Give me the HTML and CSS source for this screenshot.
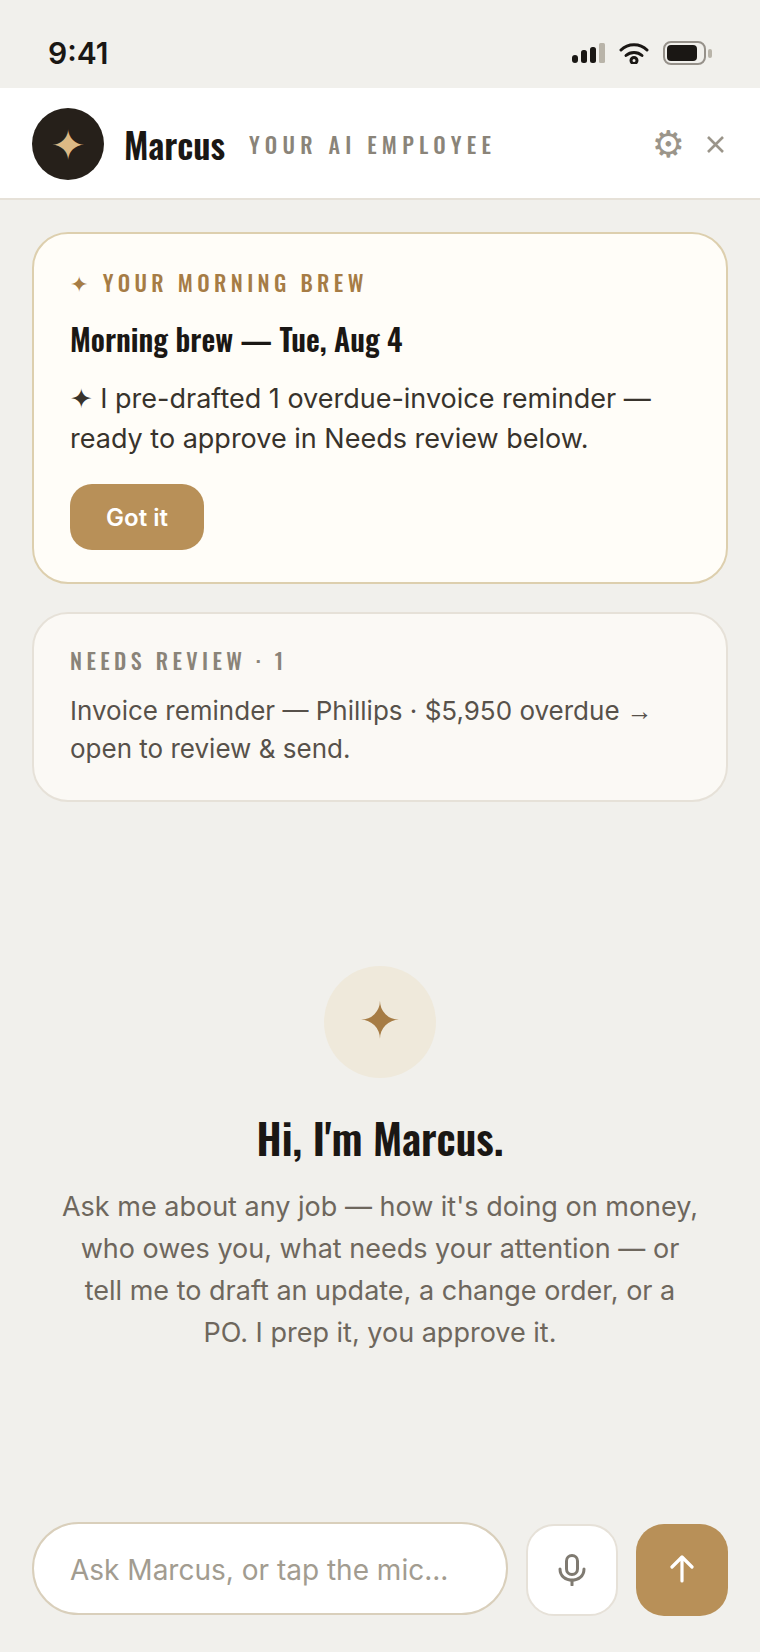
FILE: index.html
```html
<!DOCTYPE html>
<html lang="en">
<head>
    <meta charset="UTF-8">
    <meta name="viewport" content="width=device-width, initial-scale=1.0">
    <title>Marcus</title>
    <link rel="stylesheet" href="styles.css">
</head>
<body>
    <div class="app">
        <div class="status-bar">
            <span class="status-time">9:41</span>
            <div class="status-icons">
                <svg class="icon-signal" width="33" height="20" viewBox="0 0 33 20">
                    <rect x="0" y="12" width="6" height="8" rx="3" fill="#1a1714"/>
                    <rect x="9" y="7" width="6" height="13" rx="2.5" fill="#1a1714"/>
                    <rect x="18" y="4" width="6" height="16" rx="2.5" fill="#1a1714"/>
                    <rect x="27" y="0" width="6" height="20" rx="1.5" fill="#b9b4a9"/>
                </svg>
                <svg class="icon-wifi" width="30" height="22" viewBox="0 0 30 22" fill="none" stroke="#1a1714" stroke-width="3" stroke-linecap="round">
                    <path d="M2 8 C9 1 21 1 28 8"/>
                    <path d="M7 13.5 C11.5 9.5 18.500 9.500 23 13.500"/>
                    <circle cx="15" cy="18.500" r="3"/>
                </svg>
                <div class="battery"><div class="battery-fill"></div></div>
                <div class="battery-cap"></div>
            </div>
        </div>

        <header class="top-bar">
            <div class="avatar">✦</div>
            <span class="agent-name">Marcus</span>
            <span class="agent-role">YOUR AI EMPLOYEE</span>
            <span class="gear-button">⚙</span>
            <svg class="close-button" width="19" height="19" viewBox="0 0 19 19" fill="none" stroke="#9b958a" stroke-width="2.600">
                <path d="M2 2 L17 17 M17 2 L2 17"/>
            </svg>
        </header>

        <main class="content">
            <section class="card brew-card">
                <div class="card-label brew-label"><span class="label-star">✦</span>YOUR MORNING BREW</div>
                <h2 class="brew-title">Morning brew — Tue, Aug 4</h2>
                <p class="brew-text">✦ I pre-drafted 1 overdue-invoice reminder — ready to approve in Needs review below.</p>
                <button class="got-it-button">Got it</button>
            </section>

            <section class="card review-card">
                <div class="card-label review-label">NEEDS REVIEW · 1</div>
                <p class="review-text">Invoice reminder — Phillips · $5,950 overdue <span class="arrow">→</span> open to review &amp; send.</p>
            </section>

            <div class="intro">
                <div class="intro-badge"><span class="intro-star">✦</span></div>
                <h1 class="intro-title">Hi, I'm Marcus.</h1>
                <p class="intro-text">Ask me about any job — how it's doing on money, who owes you, what needs your attention — or tell me to draft an update, a change order, or a PO. I prep it, you approve it.</p>
            </div>
        </main>

        <footer class="composer">
            <div class="composer-input">Ask Marcus, or tap the mic...</div>
            <button class="mic-button">
                <svg width="28" height="32" viewBox="0 0 28 32" fill="none" stroke="#7f7a71" stroke-width="3" stroke-linecap="round">
                    <rect x="8.500" y="1.500" width="11" height="19" rx="5.500"/>
                    <path d="M2 15 C2 30 26 30 26 15"/>
                    <path d="M14 26 V31"/>
                </svg>
            </button>
            <button class="send-button">
                <svg width="26" height="30" viewBox="0 0 26 30" fill="none" stroke="#fff" stroke-width="3.200" stroke-linecap="round" stroke-linejoin="round">
                    <path d="M13 26 V2 M3 12 L13 2 L23 12"/>
                </svg>
            </button>
        </footer>
    </div>
</body>
</html>
```

FILE: styles.css
```css
* {
    box-sizing: border-box;
}

body {
    margin: 0;
    background: #f1f0ec;
    font-family: Inter, "DejaVu Sans", sans-serif;
    color: #1a1714;
}

.app {
    height: 1652px;
    display: flex;
    flex-direction: column;
}

.status-bar {
    height: 88px;
    padding: 18px 48px 0 48px;
    display: flex;
    align-items: center;
    justify-content: space-between;
    flex-shrink: 0;
}

.status-time {
    font-size: 30px;
    font-weight: 600;
}

.status-icons {
    display: flex;
    align-items: center;
}

.icon-wifi {
    margin-left: 14px;
    margin-right: 14px;
}

.battery {
    width: 43px;
    height: 24px;
    border: 2px solid #96918a;
    border-radius: 8px;
    padding: 2px;
}

.battery-fill {
    height: 100%;
    width: 30px;
    background: #1a1714;
    border-radius: 4px;
}

.battery-cap {
    width: 4px;
    height: 9px;
    margin-left: 2px;
    border-radius: 2px;
    background: #b9b4a9;
}

.top-bar {
    height: 112px;
    padding: 2px 32px 0;
    background: #fff;
    border-bottom: 2px solid #e6e1d8;
    display: flex;
    align-items: center;
    flex-shrink: 0;
}

.avatar {
    width: 72px;
    height: 72px;
    border-radius: 50%;
    background: #26201a;
    color: #dcb985;
    font-size: 42px;
    display: flex;
    align-items: center;
    justify-content: center;
}

.agent-name {
    margin-left: 20px;
    font-family: Oswald, "Open Sans", sans-serif;
    font-size: 35.200px;
    font-weight: 600;
}

.agent-role {
    margin-left: 24px;
    font-family: Oswald, "Open Sans", sans-serif;
    font-size: 22px;
    font-weight: 500;
    letter-spacing: 5.280px;
    color: #8a8479;
}

.gear-button {
    margin-left: auto;
    font-family: "DejaVu Sans", sans-serif;
    font-size: 37px;
    color: #9b958a;
}

.close-button {
    margin-left: 21px;
    margin-right: 3px;
}

.content {
    flex: 1;
    padding: 32px 32px 0;
    display: flex;
    flex-direction: column;
}

.card {
    border-radius: 36px;
    padding: 32px 36px 36px;
}

.brew-card {
    background: #fffdf8;
    border: 2px solid #ddcfae;
    height: 352px;
}

.card-label {
    font-family: Oswald, "Open Sans", sans-serif;
    font-size: 22px;
    font-weight: 500;
    letter-spacing: 4.400px;
}

.brew-label {
    color: #a67c45;
}

.label-star {
    font-family: "DejaVu Sans", sans-serif;
    font-size: 22px;
    margin-right: 10px;
}

.brew-title {
    margin: 18px 0 0;
    font-family: Oswald, "Open Sans", sans-serif;
    font-size: 30px;
    font-weight: 600;
}

.brew-text {
    margin: 18px 0 0;
    font-size: 27px;
    line-height: 40px;
    color: #38332c;
}

.got-it-button {
    margin-top: 25px;
    width: 134px;
    height: 66px;
    border: none;
    border-radius: 22px;
    background: #b89058;
    color: #fff;
    font-family: Inter, sans-serif;
    font-size: 24px;
    font-weight: 600;
}

.review-card {
    margin-top: 28px;
    height: 190px;
    background: #fbf9f5;
    border: 2px solid #e6e1d8;
    padding-top: 30px;
}

.review-label {
    color: #8a8479;
}

.review-text {
    margin: 16px 0 0;
    font-size: 26px;
    line-height: 38px;
    color: #57514a;
}

.arrow {
    font-family: "Liberation Sans", sans-serif;
}

.intro {
    flex: 1;
    padding: 0 28px 4px;
    display: flex;
    flex-direction: column;
    align-items: center;
    justify-content: center;
    text-align: center;
}

.intro-badge {
    width: 112px;
    height: 112px;
    border-radius: 50%;
    background: #efe9db;
    color: #a67c45;
    font-size: 50px;
    display: flex;
    align-items: center;
    justify-content: center;
}

.intro-star {
    margin-bottom: 4px;
}

.intro-title {
    margin: 28px 0 0;
    font-family: Oswald, "Open Sans", sans-serif;
    font-size: 42px;
    font-weight: 600;
}

.intro-text {
    margin: 18px 0 0;
    font-size: 27px;
    line-height: 42px;
    color: #6e675d;
}

.composer {
    padding: 0 32px 36px;
    display: flex;
    align-items: flex-end;
    gap: 18px;
    flex-shrink: 0;
}

.composer-input {
    flex: 1;
    height: 93px;
    margin-bottom: 1px;
    padding: 2px 0 0 36px;
    border: 2px solid #d9cfbb;
    border-radius: 47px;
    background: #fff;
    color: #a29c90;
    font-size: 28px;
    display: flex;
    align-items: center;
}

.mic-button,
.send-button {
    width: 92px;
    height: 92px;
    border-radius: 28px;
    display: flex;
    align-items: center;
    justify-content: center;
    padding: 0;
}

.mic-button {
    background: #fff;
    border: 2px solid #e6e1d8;
}

.send-button {
    background: #b89058;
    border: none;
}
```
